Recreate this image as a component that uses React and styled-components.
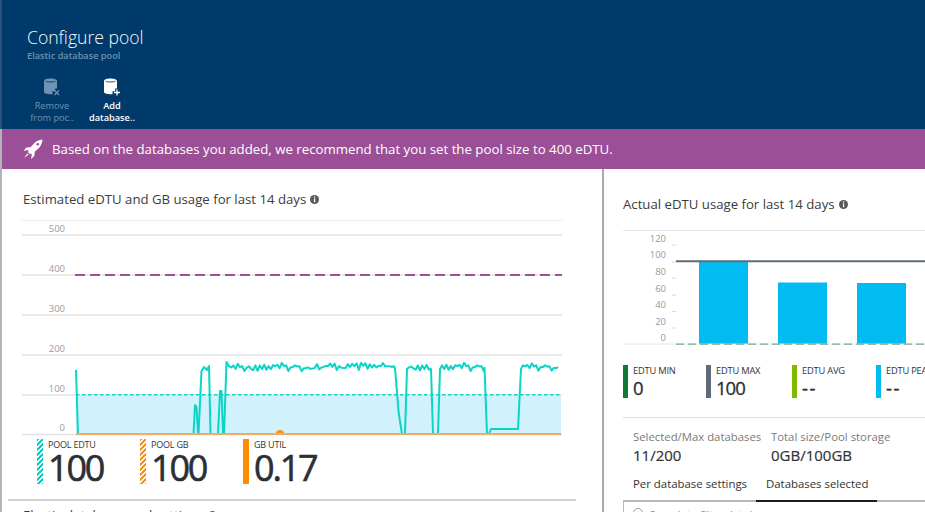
import React from 'react'
import styled, { createGlobalStyle } from 'styled-components'

const Global = createGlobalStyle`
  html, body { margin: 0; padding: 0; background: #fff; }
  body { font-family: "Open Sans", "Noto Sans", "Liberation Sans", sans-serif; color: #3a3a3a; }
`

// noisy plateau of the eDTU line, same wiggle each render
const plateau = (x0, x1, base, amp, seed) => {
  const pts = []
  let i = 0
  for (let x = x0; x < x1; x += 2.2) {
    const n = Math.sin((i + seed) * 12.9898) * 43758.5453
    const r = n - Math.floor(n)
    pts.push([x, base + (r - 0.5) * amp + (i % 2 ? 1.2 : -1.2)])
    i++
  }
  return pts
}

const edtuLine = [
  [76, 370], [78, 434], [193.5, 434], [195, 405], [196.5, 407], [198, 434], [198.5, 434],
  [201.5, 371], [204, 367], [207, 370], [209, 366], [210.5, 434], [218, 434], [220, 391],
  [221.5, 391], [223, 434], [224, 434], [226.5, 362],
  ...plateau(229, 394, 367, 6, 3),
  [395, 368], [398.5, 411], [399.5, 418], [402, 434], [405, 434], [407, 369],
  ...plateau(409, 430, 367, 5, 11),
  [431, 369], [433, 434], [438, 434], [440, 369],
  ...plateau(442, 484, 367, 6, 17),
  [484.5, 368], [487, 434], [489, 434], [491, 429], [518, 429], [521, 369],
  ...plateau(523, 559, 367, 5, 23),
].map((p) => p.join(',')).join(' ')

const Page = styled.div`
  width: 925px;
  height: 512px;
  overflow: hidden;
`

const Header = styled.header`
  height: 129px;
  box-sizing: border-box;
  background: #003a6b;
  border-left: 2px solid #27527a;
  padding: 26px 0 0 25px;
`

const Title = styled.h1`
  margin: 0;
  font-size: 17.6px;
  line-height: 22px;
  font-weight: 300;
  color: #f6f9fc;
`

const Subtitle = styled.div`
  font-size: 9.2px;
  line-height: 14px;
  font-weight: 600;
  color: #6a93b2;
  margin-top: 1px;
`

const Commands = styled.div`
  display: flex;
  margin: 15px 0 0 -5px;
`

const Command = styled.div`
  width: 60px;
  display: flex;
  flex-direction: column;
  align-items: center;
  color: ${(p) => (p.$off ? '#6d94b1' : '#fff')};
  font-size: 9.2px;
  line-height: 12px;
  font-weight: ${(p) => (p.$off ? 400 : 600)};
  text-align: center;
  svg { display: block; margin-bottom: 3px; }
`

const Banner = styled.div`
  height: 40px;
  box-sizing: border-box;
  background: #9b4f96;
  border-left: 2px solid #b4b4b4;
  display: flex;
  align-items: center;
  padding-left: 21px;
  gap: 9px;
  color: #fff;
  font-size: 13.26px;
  white-space: nowrap;
`

const Main = styled.main`
  display: grid;
  grid-template-columns: 602px 2px 1fr;
  height: 343px;
`

const LeftPanel = styled.section`
  border-left: 2px solid #b4b4b4;
  overflow: hidden;
  padding: 20px 0 0 6px;
`

const Divider = styled.div`
  background: #a9a9a9;
`

const RightPanel = styled.section`
  overflow: hidden;
  padding: 25px 0 0 19px;
`

const PanelTitle = styled.h2`
  margin: 0;
  display: flex;
  align-items: center;
  gap: 4px;
  font-size: 13.2px;
  line-height: 20px;
  font-weight: 400;
  color: #3c3c3c;
  white-space: nowrap;
  padding-left: ${(p) => p.$indent || 0}px;
`

const ChartSvg = styled.svg`
  display: block;
  margin-top: ${(p) => p.$top}px;
  margin-left: ${(p) => p.$left || 0}px;
  text { font-family: "Open Sans", "Noto Sans", sans-serif; font-size: 9.5px; fill: #9a9a9a; text-anchor: end; }
`

const BigLegend = styled.div`
  display: flex;
  margin: 3px 0 0 29px;
`

const BigItem = styled.div`
  width: 103px;
  height: 45px;
  display: flex;
  gap: 5px;
`

const Swatch = styled.div`
  width: ${(p) => p.$w || 5}px;
  flex: none;
  background: ${(p) =>
    p.$hatch
      ? `repeating-linear-gradient(135deg, ${p.$color} 0 2px, #fff 2px 3.5px)`
      : p.$color};
`

const BigLabel = styled.div`
  font-size: 9px;
  line-height: 12px;
  letter-spacing: -0.2px;
  color: #333;
`

const BigValue = styled.div`
  font-size: 36px;
  line-height: 33px;
  letter-spacing: -2.2px;
  -webkit-text-stroke: 0.6px #2b2f36;
  color: #2b2f36;
`

const Rule = styled.hr`
  border: 0;
  height: ${(p) => p.$h || 2}px;
  background: ${(p) => p.$color || '#d2d2d2'};
  margin: ${(p) => p.$m};
`

const SectionCut = styled.div`
  font-size: 13.2px;
  line-height: 16px;
  margin: 6px 0 0 15px;
  display: flex;
  align-items: center;
  gap: 4px;
  white-space: nowrap;
  color: #3c3c3c;
`

const SmallLegend = styled.div`
  display: flex;
  margin-top: 17px;
  white-space: nowrap;
`

const SmallItem = styled.div`
  width: ${(p) => p.$w}px;
  flex: none;
  height: 33px;
  display: flex;
  gap: 5px;
`

const SmallLabel = styled.div`
  font-size: 9.3px;
  line-height: 12px;
  letter-spacing: -0.2px;
  color: #333;
`

const SmallValue = styled.div`
  font-size: 18.5px;
  line-height: 21px;
  letter-spacing: ${(p) => (p.$empty ? '1.5px' : '-1px')};
  -webkit-text-stroke: 0.3px #2b2f36;
  color: #2b2f36;
`

const Stats = styled.div`
  display: flex;
  padding-left: 10px;
  white-space: nowrap;
`

const Stat = styled.div`
  width: ${(p) => p.$w}px;
  flex: none;
`

const StatLabel = styled.div`
  font-size: 11.35px;
  line-height: 18px;
  color: #7a7a7a;
`

const StatValue = styled.div`
  font-size: 15px;
  line-height: 18px;
  -webkit-text-stroke: 0.2px #333;
  color: #333;
`

const Tabs = styled.div`
  display: flex;
  margin-top: 8px;
  height: 30px;
  box-sizing: border-box;
  border-bottom: 2px solid #b8b8b8;
`

const Tab = styled.div`
  font-size: 11.4px;
  line-height: 24px;
  height: 30px;
  box-sizing: border-box;
  white-space: nowrap;
  color: #333;
  padding: 0 10px;
  width: ${(p) => p.$w}px;
  border-bottom: 2px solid ${(p) => (p.$active ? '#1c1c1c' : 'transparent')};
`

const SearchBox = styled.div`
  height: 24px;
  border-left: 1px solid #b8b8b8;
  display: flex;
  align-items: flex-start;
  gap: 6px;
  padding: 6px 0 0 9px;
  font-size: 11.4px;
  font-style: italic;
  color: #8a8a8a;
  line-height: 14px;
`

const Circle = styled.div`
  width: 8px;
  height: 8px;
  border: 1px solid #9a9a9a;
  border-radius: 50%;
  flex: none;
`

const Info = () => (
  <svg width="9" height="9" viewBox="0 0 9 9">
    <circle cx="4.5" cy="4.5" r="4.5" fill="#595959" />
    <rect x="3.9" y="1.4" width="1.3" height="1.3" fill="#fff" />
    <rect x="3.9" y="3.5" width="1.3" height="3.8" fill="#fff" />
  </svg>
)

const DbIcon = ({ color, mark }) => (
  <svg width="20" height="19" viewBox="0 0 20 19">
    <path
      d="M2 3.2C2 1.4 5 .6 8.5.6S15 1.4 15 3.2V10.5h-1.8v2.8H10.5V16.2C6 16.4 2 15.6 2 14Z"
      fill={color}
    />
    <path d="M3.6 3.2C4.6 4.2 12.4 4.2 13.4 3.2" stroke="#003a6b" strokeWidth="0.9" fill="none" />
    {mark === 'plus' ? (
      <path d="M15 11.5v6M12 14.5h6" stroke={color} strokeWidth="1.3" />
    ) : (
      <path d="M12.5 12.5l4.5 4.5M17 12.5l-4.5 4.5" stroke={color} strokeWidth="1.2" />
    )}
  </svg>
)

const Rocket = () => (
  <svg width="20" height="20" viewBox="0 0 20 20">
    <path
      d="M19.5.5c-3.6.4-6.6 1.7-8.8 4.2L7.6 8.2 3.4 8.6.4 12l4.3-.9 1 1.1-.9.9 2.2 2.2.9-.9 1 1-.9 4.5 3.3-3 .6-4.3 3.5-3.1C17.8 7.3 19.2 4.2 19.5.5Z"
      fill="#fff"
    />
    <circle cx="14.8" cy="5.2" r="1.3" fill="#9b4f96" />
    <path d="M4.3 14.5 1.2 18.8 5.6 15.8Z" fill="#fff" />
  </svg>
)

const leftGrid = [
  [500, 235], [400, 275], [300, 315], [200, 355], [100, 395], [0, 434.5],
]
const rightLabels = [
  [120, 242], [100, 258], [80, 275], [60, 292], [40, 308], [20, 325], [0, 341],
]

const EstimatedChart = () => (
  <ChartSvg $top={11} $left={14} width="540" height="216" viewBox="22 220 540 216">
    <line x1="22" x2="562" y1="220.5" y2="220.5" stroke="#ececec" />
    {leftGrid.map(([v, y]) => (
      <g key={v}>
        <line x1="22" x2="562" y1={y} y2={y} stroke="#e2e2e2" strokeWidth="1.3" />
        <text x="65" y={y - 3.5}>{v}</text>
      </g>
    ))}
    <rect x="76" y="395" width="485" height="39" fill="#d1f2fc" />
    <line x1="75" x2="562" y1="275" y2="275" stroke="#a0509a" strokeWidth="2" strokeDasharray="10 5" />
    <line x1="76" x2="561" y1="394.7" y2="394.7" stroke="#0fd0c4" strokeWidth="1.5" strokeDasharray="3.5 2.5" />
    <polyline points={edtuLine} fill="none" stroke="#0ad5c6" strokeWidth="2" strokeLinejoin="round" />
    <path d="M276 434a4 4 0 0 1 8 0Z" fill="#f7931e" />
    <line x1="76" x2="561" y1="434" y2="434" stroke="#efab66" strokeWidth="1.8" />
  </ChartSvg>
)

const ActualChart = () => (
  <ChartSvg $top={16} width="302" height="118" viewBox="623 230 302 118">
    <line x1="623" x2="925" y1="230.5" y2="230.5" stroke="#e6e6e6" />
    {rightLabels.map(([v, y]) => (
      <text key={v} x="666" y={y}>{v}</text>
    ))}
    {[245, 262, 278, 295, 311.5, 328].map((y) => (
      <line key={y} x1="672" x2="676" y1={y} y2={y} stroke="#d8d8d8" />
    ))}
    <rect x="699" y="262" width="49" height="82" fill="#00bcf2" />
    <rect x="778" y="282.5" width="49" height="61.5" fill="#00bcf2" />
    <rect x="857" y="283" width="49" height="61" fill="#00bcf2" />
    <line x1="623" x2="925" y1="344" y2="344" stroke="#e4e4e4" />
    <line x1="676" x2="925" y1="344.2" y2="344.2" stroke="#6fb08a" strokeWidth="1.3" strokeDasharray="8 4" />
    <line x1="676" x2="925" y1="261.3" y2="261.3" stroke="#5d6b7a" strokeWidth="2" />
  </ChartSvg>
)

export default function App() {
  return (
    <Page>
      <Global />
      <Header>
        <Title>Configure pool</Title>
        <Subtitle>Elastic database pool</Subtitle>
        <Commands>
          <Command $off>
            <DbIcon color="#6d94b1" mark="x" />
            Remove<br />from poc..
          </Command>
          <Command>
            <DbIcon color="#fff" mark="plus" />
            Add<br />database..
          </Command>
        </Commands>
      </Header>
      <Banner>
        <Rocket />
        Based on the databases you added, we recommend that you set the pool size to 400 eDTU.
      </Banner>
      <Main>
        <LeftPanel>
          <PanelTitle $indent={15}>
            Estimated eDTU and GB usage for last 14 days <Info />
          </PanelTitle>
          <EstimatedChart />
          <BigLegend>
            <BigItem>
              <Swatch $color="#0fd0c4" $hatch $w={6} />
              <div>
                <BigLabel>POOL EDTU</BigLabel>
                <BigValue>100</BigValue>
              </div>
            </BigItem>
            <BigItem>
              <Swatch $color="#f7931e" $hatch $w={6} />
              <div>
                <BigLabel>POOL GB</BigLabel>
                <BigValue>100</BigValue>
              </div>
            </BigItem>
            <BigItem>
              <Swatch $color="#ff8c00" $w={6} />
              <div>
                <BigLabel>GB UTIL</BigLabel>
                <BigValue>0.17</BigValue>
              </div>
            </BigItem>
          </BigLegend>
          <Rule $m="15px 26px 0 0" />
          <SectionCut>
            Elastic database pool settings <Info />
          </SectionCut>
        </LeftPanel>
        <Divider />
        <RightPanel>
          <PanelTitle>
            Actual eDTU usage for last 14 days <Info />
          </PanelTitle>
          <ActualChart />
          <SmallLegend>
            <SmallItem $w={83}>
              <Swatch $color="#0f7a36" />
              <div>
                <SmallLabel>EDTU MIN</SmallLabel>
                <SmallValue>0</SmallValue>
              </div>
            </SmallItem>
            <SmallItem $w={86}>
              <Swatch $color="#5d6b7a" />
              <div>
                <SmallLabel>EDTU MAX</SmallLabel>
                <SmallValue>100</SmallValue>
              </div>
            </SmallItem>
            <SmallItem $w={84}>
              <Swatch $color="#7fba00" />
              <div>
                <SmallLabel>EDTU AVG</SmallLabel>
                <SmallValue $empty>--</SmallValue>
              </div>
            </SmallItem>
            <SmallItem $w={80}>
              <Swatch $color="#00bcf2" />
              <div>
                <SmallLabel>EDTU PEAK</SmallLabel>
                <SmallValue $empty>--</SmallValue>
              </div>
            </SmallItem>
          </SmallLegend>
          <Rule $h={1} $color="#e0e0e0" $m="19px 0 10px 0" />
          <Stats>
            <Stat $w={138}>
              <StatLabel>Selected/Max databases</StatLabel>
              <StatValue>11/200</StatValue>
            </Stat>
            <Stat $w={160}>
              <StatLabel>Total size/Pool storage</StatLabel>
              <StatValue>0GB/100GB</StatValue>
            </Stat>
          </Stats>
          <Tabs>
            <Tab $w={133}>Per database settings</Tab>
            <Tab $w={121} $active>Databases selected</Tab>
          </Tabs>
          <SearchBox>
            <Circle />
            Search to filter databases
          </SearchBox>
        </RightPanel>
      </Main>
    </Page>
  )
}
